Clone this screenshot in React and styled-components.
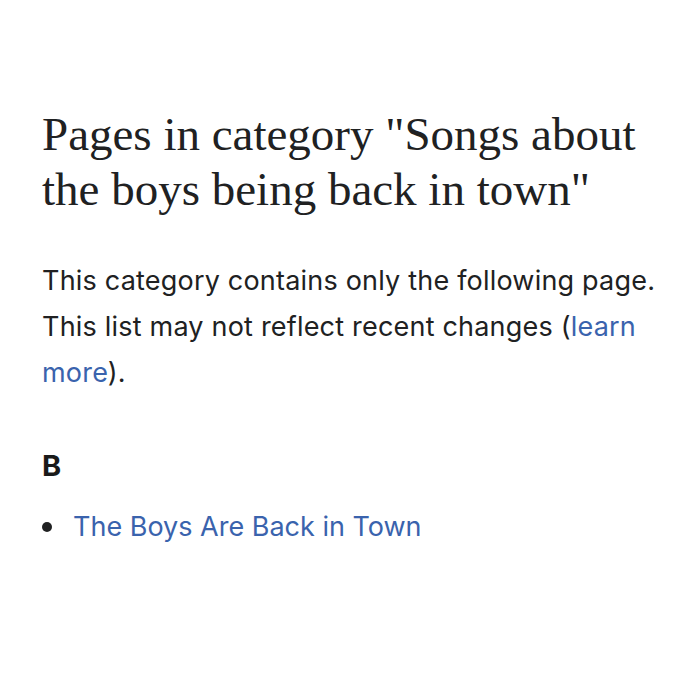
import React from "react";
import styled, { createGlobalStyle } from "styled-components";

const Global = createGlobalStyle`
  html, body { margin: 0; padding: 0; background: #ffffff; }
  body { width: 700px; height: 700px; overflow: hidden; }
`;

const Page = styled.main`
  box-sizing: border-box;
  width: 700px;
  height: 700px;
  padding: 107px 20px 0 42px;
  background: #fff;
  color: #202122;
`;

const Title = styled.h1`
  margin: 0;
  max-width: 600px;
  font-family: "Liberation Serif", "DejaVu Serif", serif;
  font-weight: normal;
  font-size: 47px;
  line-height: 55px;
  color: #202122;
`;

const Intro = styled.p`
  margin: 41px 0 0;
  max-width: 630px;
  font-family: Inter, "Liberation Sans", Arial, sans-serif;
  font-size: 27px;
  letter-spacing: 0.2px;
  line-height: 46px;
  color: #202122;
`;

const Link = styled.a`
  color: #3a63ad;
  text-decoration: none;
`;

const Letter = styled.h3`
  margin: 50px 0 0;
  font-family: Inter, "Liberation Sans", Arial, sans-serif;
  font-weight: bold;
  font-size: 29px;
  line-height: 40px;
  color: #1a1a1a;
`;

const List = styled.ul`
  margin: 21px 0 0;
  padding: 0;
  list-style: none;
`;

const Item = styled.li`
  display: flex;
  align-items: center;
  gap: 21px;
  font-family: Inter, "Liberation Sans", Arial, sans-serif;
  font-size: 27px;
  line-height: 40px;
  &::before {
    content: "";
    flex: none;
    width: 10px;
    height: 10px;
    border-radius: 50%;
    background: #202122;
  }
`;

export default function App() {
  return (
    <>
      <Global />
      <Page>
        <Title>Pages in category "Songs about the boys being back in town"</Title>
        <Intro>
          This category contains only the following page. This list may not reflect recent changes (
          <Link href="#">learn more</Link>).
        </Intro>
        <Letter>B</Letter>
        <List>
          <Item>
            <Link href="#">The Boys Are Back in Town</Link>
          </Item>
        </List>
      </Page>
    </>
  );
}
